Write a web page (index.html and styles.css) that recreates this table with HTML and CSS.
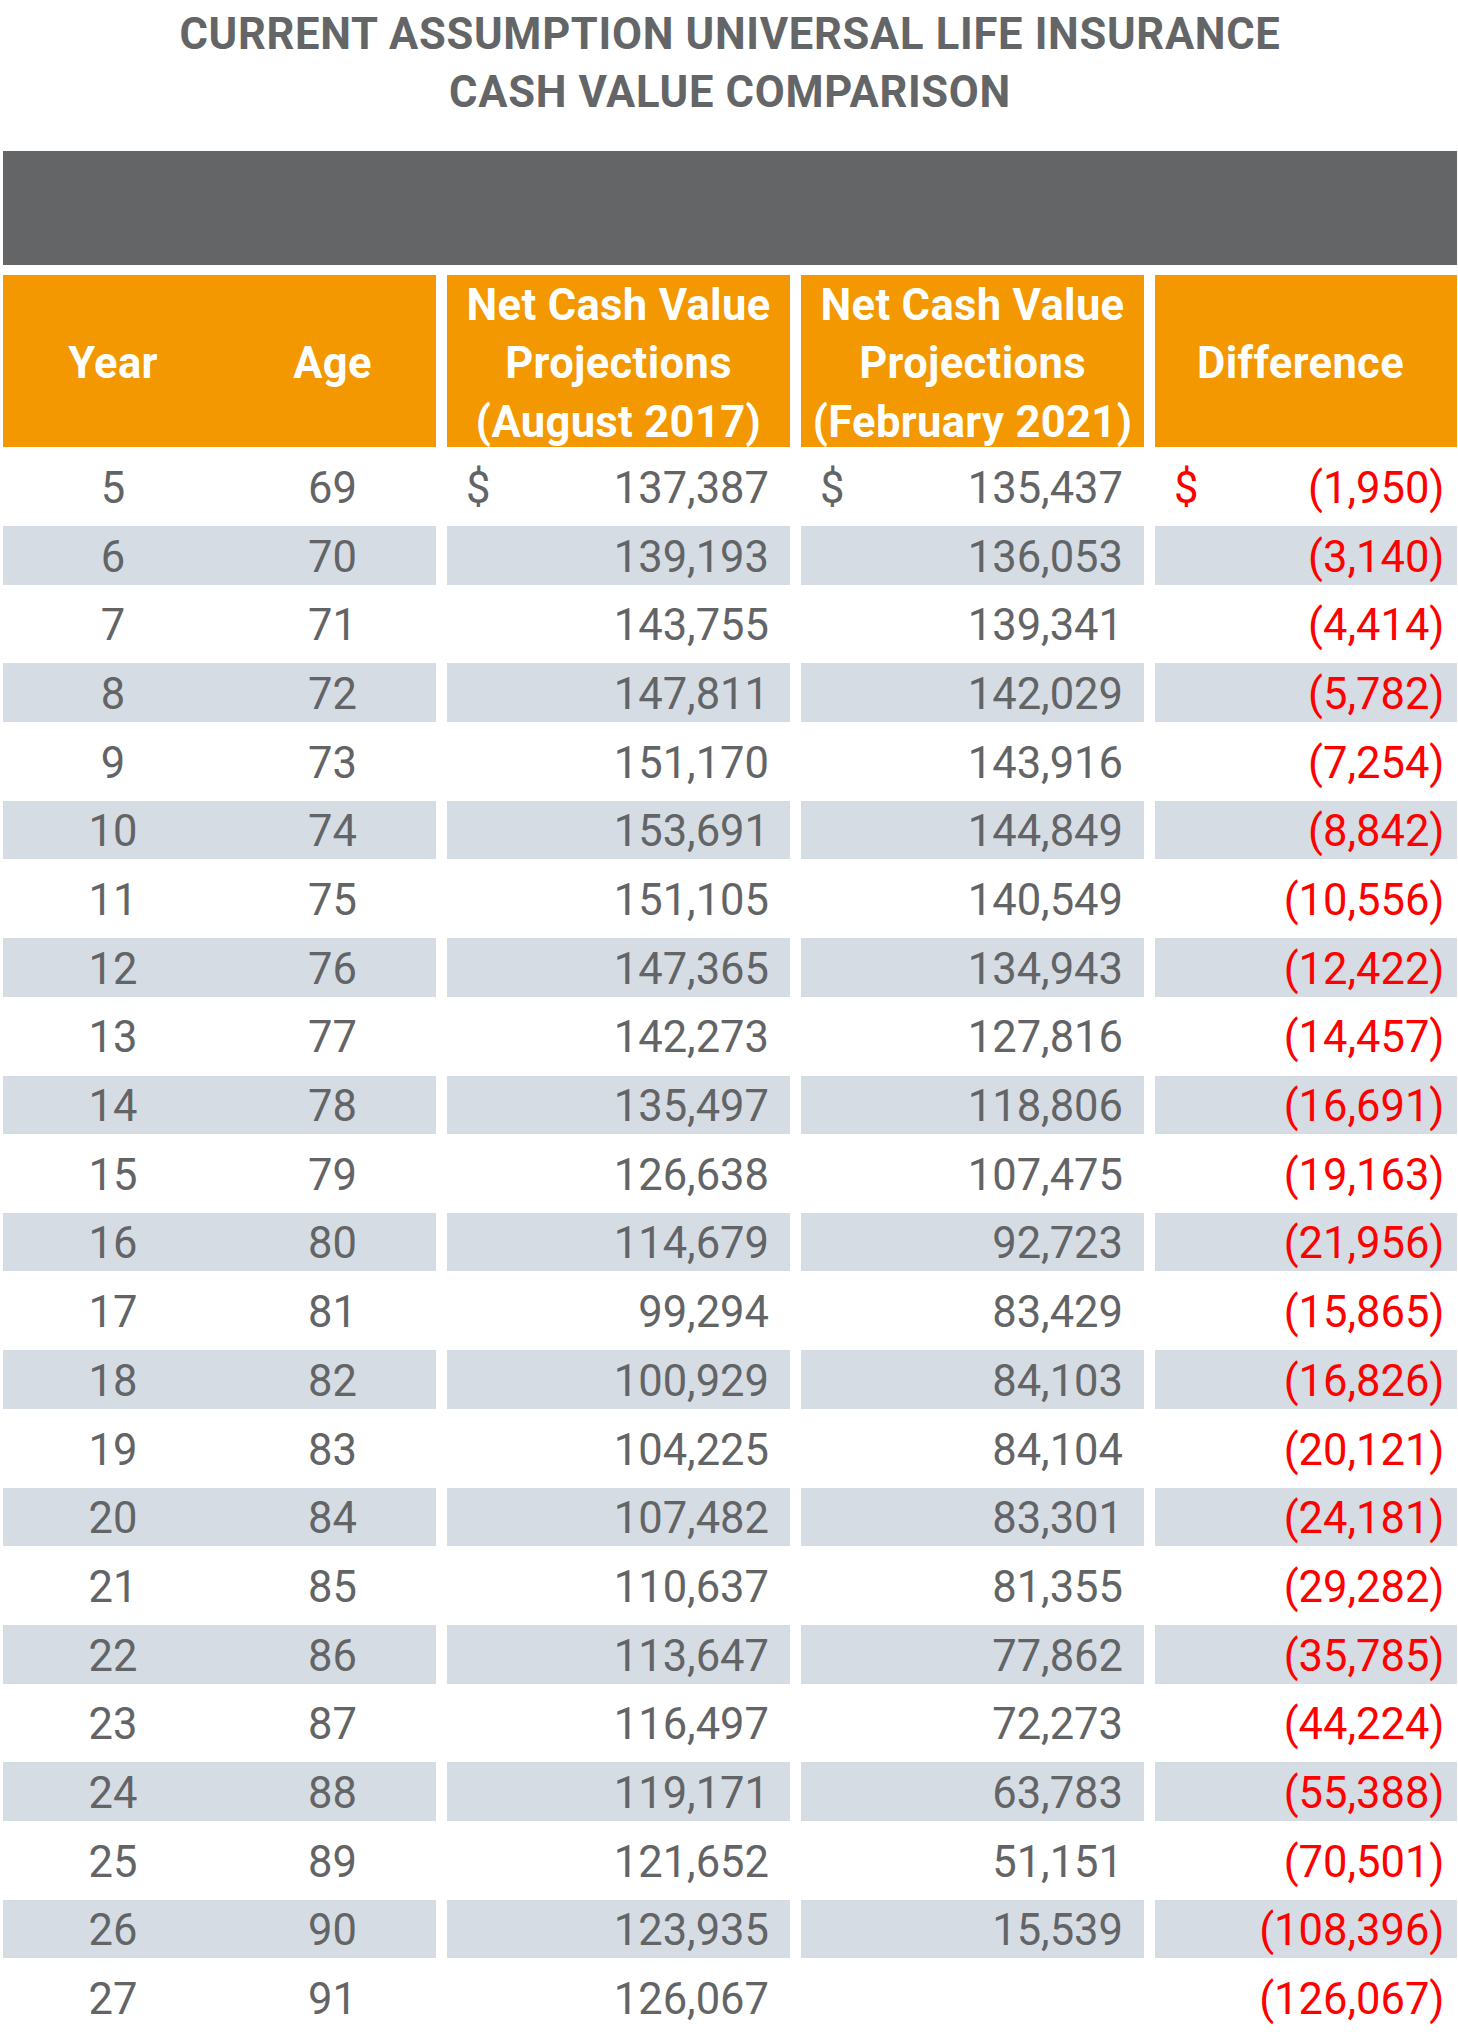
FILE: index.html
```html
<!DOCTYPE html>
<html lang="en">
<head>
<meta charset="utf-8">
<title>Cash Value Comparison</title>
<link rel="stylesheet" href="styles.css">
</head>
<body>
<div class="page">
  <h1 class="title">CURRENT ASSUMPTION UNIVERSAL LIFE INSURANCE<br>CASH VALUE COMPARISON</h1>
  <div class="table">
    <div class="band"></div>

    <div class="hd hd-a"><span class="yr">Year</span><span class="ag">Age</span></div>
    <div class="hd">Net Cash Value<br>Projections<br>(August 2017)</div>
    <div class="hd">Net Cash Value<br>Projections<br>(February 2021)</div>
    <div class="hd hd-d">Difference</div>

    <div class="c a"><span class="yr">5</span><span class="ag">69</span></div>
    <div class="c m"><span>$</span><span>137,387</span></div>
    <div class="c m"><span>$</span><span>135,437</span></div>
    <div class="c m d"><span>$</span><span>(1,950)</span></div>

    <div class="c a s"><span class="yr">6</span><span class="ag">70</span></div>
    <div class="c m s"><span></span><span>139,193</span></div>
    <div class="c m s"><span></span><span>136,053</span></div>
    <div class="c m d s"><span></span><span>(3,140)</span></div>

    <div class="c a"><span class="yr">7</span><span class="ag">71</span></div>
    <div class="c m"><span></span><span>143,755</span></div>
    <div class="c m"><span></span><span>139,341</span></div>
    <div class="c m d"><span></span><span>(4,414)</span></div>

    <div class="c a s"><span class="yr">8</span><span class="ag">72</span></div>
    <div class="c m s"><span></span><span>147,811</span></div>
    <div class="c m s"><span></span><span>142,029</span></div>
    <div class="c m d s"><span></span><span>(5,782)</span></div>

    <div class="c a"><span class="yr">9</span><span class="ag">73</span></div>
    <div class="c m"><span></span><span>151,170</span></div>
    <div class="c m"><span></span><span>143,916</span></div>
    <div class="c m d"><span></span><span>(7,254)</span></div>

    <div class="c a s"><span class="yr">10</span><span class="ag">74</span></div>
    <div class="c m s"><span></span><span>153,691</span></div>
    <div class="c m s"><span></span><span>144,849</span></div>
    <div class="c m d s"><span></span><span>(8,842)</span></div>

    <div class="c a"><span class="yr">11</span><span class="ag">75</span></div>
    <div class="c m"><span></span><span>151,105</span></div>
    <div class="c m"><span></span><span>140,549</span></div>
    <div class="c m d"><span></span><span>(10,556)</span></div>

    <div class="c a s"><span class="yr">12</span><span class="ag">76</span></div>
    <div class="c m s"><span></span><span>147,365</span></div>
    <div class="c m s"><span></span><span>134,943</span></div>
    <div class="c m d s"><span></span><span>(12,422)</span></div>

    <div class="c a"><span class="yr">13</span><span class="ag">77</span></div>
    <div class="c m"><span></span><span>142,273</span></div>
    <div class="c m"><span></span><span>127,816</span></div>
    <div class="c m d"><span></span><span>(14,457)</span></div>

    <div class="c a s"><span class="yr">14</span><span class="ag">78</span></div>
    <div class="c m s"><span></span><span>135,497</span></div>
    <div class="c m s"><span></span><span>118,806</span></div>
    <div class="c m d s"><span></span><span>(16,691)</span></div>

    <div class="c a"><span class="yr">15</span><span class="ag">79</span></div>
    <div class="c m"><span></span><span>126,638</span></div>
    <div class="c m"><span></span><span>107,475</span></div>
    <div class="c m d"><span></span><span>(19,163)</span></div>

    <div class="c a s"><span class="yr">16</span><span class="ag">80</span></div>
    <div class="c m s"><span></span><span>114,679</span></div>
    <div class="c m s"><span></span><span>92,723</span></div>
    <div class="c m d s"><span></span><span>(21,956)</span></div>

    <div class="c a"><span class="yr">17</span><span class="ag">81</span></div>
    <div class="c m"><span></span><span>99,294</span></div>
    <div class="c m"><span></span><span>83,429</span></div>
    <div class="c m d"><span></span><span>(15,865)</span></div>

    <div class="c a s"><span class="yr">18</span><span class="ag">82</span></div>
    <div class="c m s"><span></span><span>100,929</span></div>
    <div class="c m s"><span></span><span>84,103</span></div>
    <div class="c m d s"><span></span><span>(16,826)</span></div>

    <div class="c a"><span class="yr">19</span><span class="ag">83</span></div>
    <div class="c m"><span></span><span>104,225</span></div>
    <div class="c m"><span></span><span>84,104</span></div>
    <div class="c m d"><span></span><span>(20,121)</span></div>

    <div class="c a s"><span class="yr">20</span><span class="ag">84</span></div>
    <div class="c m s"><span></span><span>107,482</span></div>
    <div class="c m s"><span></span><span>83,301</span></div>
    <div class="c m d s"><span></span><span>(24,181)</span></div>

    <div class="c a"><span class="yr">21</span><span class="ag">85</span></div>
    <div class="c m"><span></span><span>110,637</span></div>
    <div class="c m"><span></span><span>81,355</span></div>
    <div class="c m d"><span></span><span>(29,282)</span></div>

    <div class="c a s"><span class="yr">22</span><span class="ag">86</span></div>
    <div class="c m s"><span></span><span>113,647</span></div>
    <div class="c m s"><span></span><span>77,862</span></div>
    <div class="c m d s"><span></span><span>(35,785)</span></div>

    <div class="c a"><span class="yr">23</span><span class="ag">87</span></div>
    <div class="c m"><span></span><span>116,497</span></div>
    <div class="c m"><span></span><span>72,273</span></div>
    <div class="c m d"><span></span><span>(44,224)</span></div>

    <div class="c a s"><span class="yr">24</span><span class="ag">88</span></div>
    <div class="c m s"><span></span><span>119,171</span></div>
    <div class="c m s"><span></span><span>63,783</span></div>
    <div class="c m d s"><span></span><span>(55,388)</span></div>

    <div class="c a"><span class="yr">25</span><span class="ag">89</span></div>
    <div class="c m"><span></span><span>121,652</span></div>
    <div class="c m"><span></span><span>51,151</span></div>
    <div class="c m d"><span></span><span>(70,501)</span></div>

    <div class="c a s"><span class="yr">26</span><span class="ag">90</span></div>
    <div class="c m s"><span></span><span>123,935</span></div>
    <div class="c m s"><span></span><span>15,539</span></div>
    <div class="c m d s"><span></span><span>(108,396)</span></div>

    <div class="c a"><span class="yr">27</span><span class="ag">91</span></div>
    <div class="c m"><span></span><span>126,067</span></div>
    <div class="c m"><span></span><span></span></div>
    <div class="c m d"><span></span><span>(126,067)</span></div>
  </div>
</div>
</body>
</html>
```

FILE: styles.css
```css
html, body {
  margin: 0;
  padding: 0;
  background: #ffffff;
}

body {
  font-family: Roboto, "Liberation Sans", Arial, sans-serif;
  color: #636466;
}

.page {
  width: 1454px;
  padding: 0 0 0 3px;
}

.title {
  margin: 0 0 29.5px 0;
  padding-top: 5.5px;
  font-size: 43.5px;
  line-height: 58px;
  font-weight: 700;
  letter-spacing: 0.7px;
  text-align: center;
  color: #646567;
}

.table {
  display: grid;
  grid-template-columns: 433px 343px 343px 302px;
  grid-template-rows: 114px 172px;
  grid-auto-rows: 58.5px;
  column-gap: 11px;
  row-gap: 10.2px;
}

.band {
  grid-column: 1 / -1;
  background: #646567;
}

.hd {
  background: #f39800;
  color: #ffffff;
  font-weight: 700;
  font-size: 43.5px;
  line-height: 58.5px;
  letter-spacing: 0.35px;
  text-align: center;
  display: flex;
  align-items: center;
  justify-content: center;
  padding-top: 6.5px;
  white-space: nowrap;
  box-sizing: border-box;
}

.hd-a {
  justify-content: flex-start;
}

.hd-d {
  padding-right: 11px;
}

.yr {
  display: inline-block;
  width: 220px;
  text-align: center;
}

.ag {
  display: inline-block;
  width: 213px;
  padding-left: 6px;
  box-sizing: border-box;
  text-align: center;
}

.c {
  font-size: 43.5px;
  line-height: 58.5px;
  padding-top: 2.5px;
  white-space: nowrap;
  box-sizing: border-box;
}

.a {
  display: flex;
}

.m {
  display: flex;
  justify-content: space-between;
  padding-left: 19px;
  padding-right: 21px;
}

.d {
  color: #ff0000;
  padding-right: 12.5px;
}

.s {
  background: #d6dce4;
}
```
